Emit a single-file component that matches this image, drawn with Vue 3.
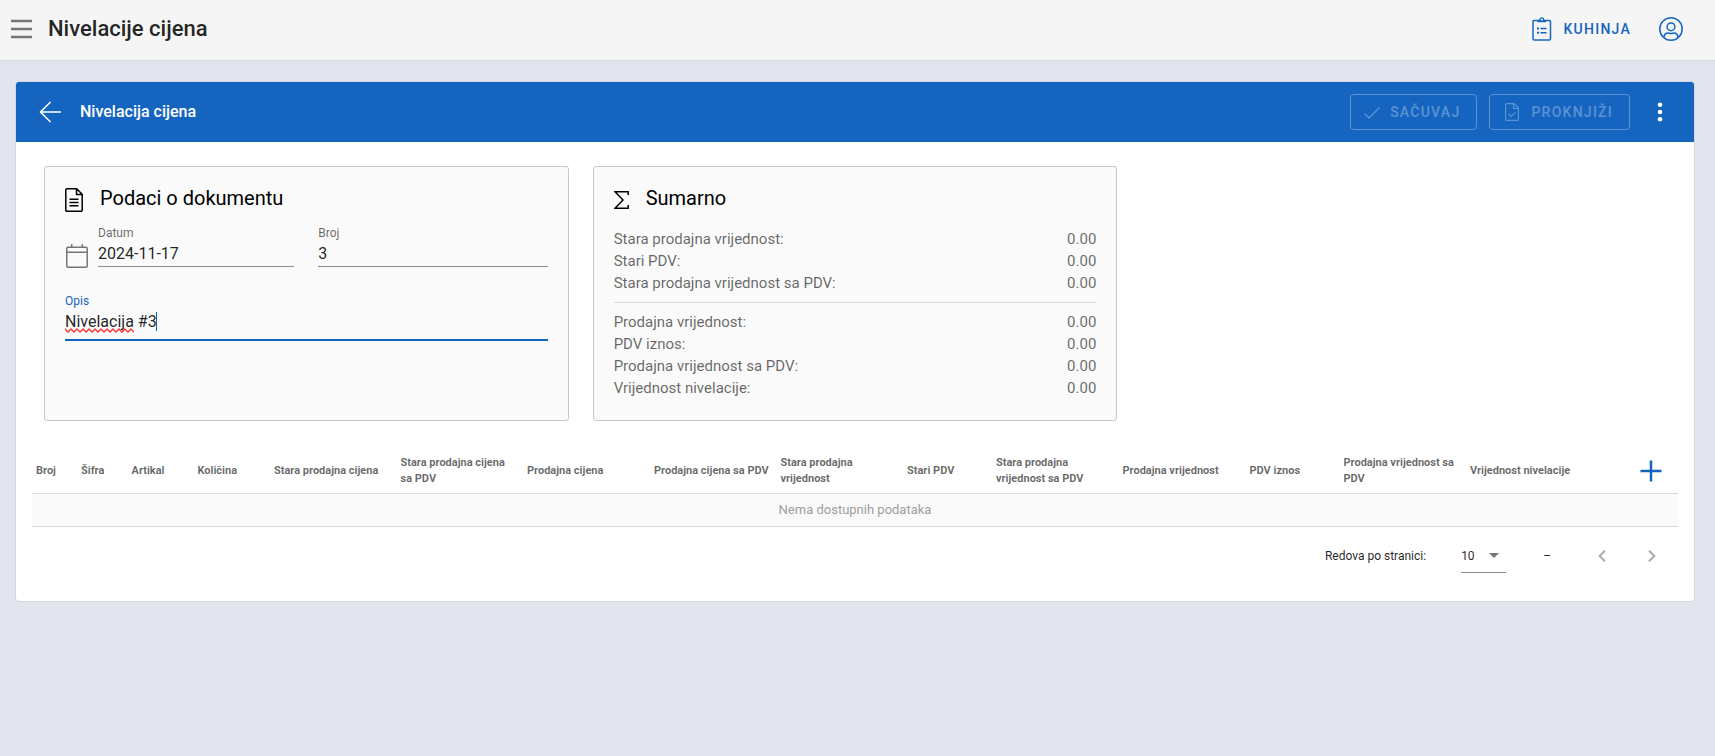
<script setup>
import { ref } from 'vue'

const datum = ref('2024-11-17')
const broj = ref('3')
const opis = ref('Nivelacija #3')
const perPage = ref('10')

const before = [
  { label: 'Stara prodajna vrijednost:', value: '0.00' },
  { label: 'Stari PDV:', value: '0.00' },
  { label: 'Stara prodajna vrijednost sa PDV:', value: '0.00' },
]
const after = [
  { label: 'Prodajna vrijednost:', value: '0.00' },
  { label: 'PDV iznos:', value: '0.00' },
  { label: 'Prodajna vrijednost sa PDV:', value: '0.00' },
  { label: 'Vrijednost nivelacije:', value: '0.00' },
]

// Relative column weights
const columns = [
  { title: 'Broj', w: 90 },
  { title: 'Šifra', w: 101 },
  { title: 'Artikal', w: 132 },
  { title: 'Količina', w: 153 },
  { title: 'Stara prodajna cijena', w: 253 },
  { title: 'Stara prodajna cijena sa PDV', w: 253 },
  { title: 'Prodajna cijena', w: 254 },
  { title: 'Prodajna cijena sa PDV', w: 253 },
  { title: 'Stara prodajna vrijednost', w: 253 },
  { title: 'Stari PDV', w: 178 },
  { title: 'Stara prodajna vrijednost sa PDV', w: 253 },
  { title: 'Prodajna vrijednost', w: 254 },
  { title: 'PDV iznos', w: 188 },
  { title: 'Prodajna vrijednost sa PDV', w: 253 },
  { title: 'Vrijednost nivelacije', w: 253 },
]
const actionWeight = 171
const total = columns.reduce((s, c) => s + c.w, actionWeight)
const pct = (w) => ({ width: (w / total) * 100 + '%' })
</script>

<template>
  <div class="app">
    <header class="topbar">
      <button class="icon-btn menu" type="button" aria-label="Meni">
        <svg width="22" height="20" viewBox="0 0 22 20"><path d="M0 2h21M0 10h21M0 18h21" stroke="#757575" stroke-width="2.300" /></svg>
      </button>
      <h1>Nivelacije cijena</h1>
      <button class="kitchen" type="button">
        <svg width="20" height="24" viewBox="0 0 20 24" fill="none" stroke="currentColor">
          <rect x="1" y="3.5" width="17.5" height="19.5" rx="1.2" stroke-width="1.5" />
          <path d="M5.500 3h2.300a2 2 0 1 1 4 0H14.100v2.200H5.500z" fill="currentColor" stroke="none" />
          <circle cx="9.800" cy="2.600" r="1.800" stroke-width="1.300" fill="#f5f5f5" />
          <path d="M8.500 11.500h6M8.500 15.800h6" stroke-width="1.600" />
          <path d="M5 11.500h2M5 15.800h2" stroke-width="2" />
        </svg>
        KUHINJA
      </button>
      <button class="icon-btn account" type="button" aria-label="Korisnički račun">
        <svg width="24" height="24" viewBox="0 0 24 24" fill="none" stroke="currentColor" stroke-width="1.500">
          <circle cx="12" cy="12" r="11.200" />
          <circle cx="12" cy="9.800" r="3.900" />
          <path d="M5 20.300c.2-3.400 2.200-4.300 4.300-4.300.9 0 1.500.4 2.700.4s1.800-.4 2.700-.4c2.100 0 4.100.9 4.300 4.300" />
        </svg>
      </button>
    </header>

    <main class="card">
      <div class="toolbar">
        <button class="icon-btn back" type="button" aria-label="Nazad">
          <svg width="22" height="22" viewBox="0 0 22 22" fill="none" stroke="#fff" stroke-width="1.500"><path d="M11.500 1 1.500 11l10 10M1.500 11H22" /></svg>
        </button>
        <h2>Nivelacija cijena</h2>
        <button class="outlined save" type="button" disabled>
          <svg width="16" height="18" viewBox="0 0 16 18" fill="none" stroke="currentColor" stroke-width="1.400"><path d="M.5 10.500 5 15 15.500 4.500" /></svg>
          SAČUVAJ
        </button>
        <button class="outlined post" type="button" disabled>
          <svg width="14" height="18" viewBox="0 0 14 18" fill="none" stroke="currentColor" stroke-width="1.200">
            <path d="M1.600.6h7.400L13.400 5v11.400a1 1 0 0 1-1 1H1.600a1 1 0 0 1-1-1V1.600a1 1 0 0 1 1-1zM8.500.6v4.900h4.900M3.500 11l2.500 2.500L10.800 9" />
          </svg>
          PROKNJIŽI
        </button>
        <button class="icon-btn more" type="button" aria-label="Više opcija">
          <svg width="6" height="20" viewBox="0 0 6 20" fill="#fff"><circle cx="3" cy="2.700" r="2.300" /><circle cx="3" cy="10" r="2.300" /><circle cx="3" cy="17.300" r="2.300" /></svg>
        </button>
      </div>

      <div class="panels">
        <section class="panel">
          <h3>
            <svg width="18" height="24" viewBox="0 0 18 24" fill="none" stroke="currentColor" stroke-width="1.500">
              <path d="M2 .8h9.700L17.200 6.300V22a1.200 1.200 0 0 1-1.200 1.200H2A1.200 1.200 0 0 1 .8 22V2A1.200 1.200 0 0 1 2 .8zM11.500.8v5.700h5.700M4.500 11.300h9M4.500 14.500h9M4.500 17.700h9" />
            </svg>
            <span>Podaci o dokumentu</span>
          </h3>
          <div class="fields">
            <div class="date">
              <svg width="24" height="24" viewBox="0 0 24 24" fill="none" stroke="#757575" stroke-width="1.500">
                <rect x="1.800" y="3.200" width="20.400" height="20" rx="1.200" /><path d="M2 8.200h20M6.700 0v3.500M17.300 0v3.500" />
              </svg>
              <div class="field">
                <label for="datum">Datum</label>
                <input id="datum" v-model="datum" type="text" />
              </div>
            </div>
            <div class="field">
              <label for="broj">Broj</label>
              <input id="broj" v-model="broj" type="text" />
            </div>
            <div class="field active">
              <label for="opis">Opis</label>
              <input id="opis" v-model="opis" type="text" spellcheck="false" />
              <svg class="squiggle" width="69" height="5" viewBox="0 0 69 5" fill="none" stroke="#f33" aria-hidden="true">
                <defs><pattern id="wave" width="6" height="5" patternUnits="userSpaceOnUse"><path d="M-1 0 0 1l3 3 3-3 1-1" stroke-width="1.300" /></pattern></defs>
                <rect width="69" height="5" fill="url(#wave)" stroke="none" />
              </svg>
              <span class="caret" aria-hidden="true"></span>
            </div>
          </div>
        </section>

        <section class="panel summary">
          <h3>
            <svg width="15" height="24" viewBox="0 0 15 24" fill="none" stroke="currentColor" stroke-width="1.500">
              <path d="M14.200 7V3.800H1l8 8.200-8 8.200h13.200V17" />
            </svg>
            <span>Sumarno</span>
          </h3>
          <dl>
            <div v-for="r in before" :key="r.label"><dt>{{ r.label }}</dt><dd>{{ r.value }}</dd></div>
          </dl>
          <hr />
          <dl>
            <div v-for="r in after" :key="r.label"><dt>{{ r.label }}</dt><dd>{{ r.value }}</dd></div>
          </dl>
        </section>
      </div>

      <div class="listing">
        <table>
          <colgroup>
            <col v-for="c in columns" :key="c.title" :style="pct(c.w)" />
            <col :style="pct(actionWeight)" />
          </colgroup>
          <thead>
            <tr>
              <th v-for="c in columns" :key="c.title" scope="col">{{ c.title }}</th>
              <th class="action" scope="col">
                <button class="icon-btn add" type="button" aria-label="Dodaj">
                  <svg width="22" height="22" viewBox="0 0 22 22" stroke="#1565c0" stroke-width="2.500"><path d="M11 .500v21M.500 11h21" /></svg>
                </button>
              </th>
            </tr>
          </thead>
          <tbody>
            <tr><td :colspan="columns.length + 1">Nema dostupnih podataka</td></tr>
          </tbody>
        </table>
        <div class="pager">
          <label for="per-page">Redova po stranici:</label>
          <span class="select">
            <select id="per-page" v-model="perPage">
              <option>10</option>
              <option>25</option>
              <option>50</option>
            </select>
            <svg width="10" height="5" viewBox="0 0 10 5" fill="#757575"><path d="M0 0h10L5 5z" /></svg>
          </span>
          <span class="range">–</span>
          <button class="icon-btn page" type="button" disabled aria-label="Prethodna stranica">
            <svg width="8" height="12" viewBox="0 0 8 12" fill="none" stroke="#b0b0b0" stroke-width="2.200"><path d="M7 .700 1.700 6 7 11.300" /></svg>
          </button>
          <button class="icon-btn page" type="button" disabled aria-label="Sljedeća stranica">
            <svg width="8" height="12" viewBox="0 0 8 12" fill="none" stroke="#b0b0b0" stroke-width="2.200"><path d="M1 .700 6.300 6 1 11.300" /></svg>
          </button>
        </div>
      </div>
    </main>
  </div>
</template>

<style>
body {
  background: #e2e5ed;
}
</style>

<style scoped>
.app {
  min-height: 100vh;
  font-family: Roboto, "Liberation Sans", sans-serif;
  color: rgba(0, 0, 0, 0.87);
}
.app *,
.app {
  box-sizing: border-box;
}
h1,
h2,
h3,
dl,
dd {
  margin: 0;
}
svg {
  display: block;
  flex: none;
}
button,
input,
select {
  font-family: inherit;
  color: inherit;
}
button {
  border: 0;
  padding: 0;
  background: none;
  display: flex;
  align-items: center;
}
.icon-btn {
  justify-content: center;
  flex: none;
}
.topbar {
  height: 61px;
  display: flex;
  align-items: center;
  padding: 0 32px 2px 11px;
  background: #f5f5f5;
  border-bottom: 1px solid #d5d7e2;
}
.topbar h1 {
  margin: 0 auto 0 15px;
  font-size: 22px;
  font-weight: 500;
  line-height: 28px;
}
.kitchen {
  gap: 12px;
  color: #1565c0;
  font-size: 14px;
  font-weight: 500;
  letter-spacing: 0.0892em;
}
.account {
  margin-left: 28px;
  color: #1565c0;
}
.card {
  margin: 20px 20px 24px 15px;
  background: #fff;
  border: 1px solid #d3d7e2;
  border-radius: 4px;
}
.toolbar {
  height: 60px;
  display: flex;
  align-items: center;
  padding: 0 31px 0 23px;
  background: #1565c0;
  color: #fff;
  border-radius: 3px 3px 0 0;
}
.toolbar h2 {
  margin: 0 auto 0 19px;
  padding-bottom: 2px;
  font-size: 16px;
  font-weight: 500;
}
.outlined {
  height: 36px;
  gap: 10px;
  padding: 0 16px 0 13px;
  border: 1px solid #5b93d3;
  border-radius: 4px;
  color: #5b93d3;
  font-size: 14px;
  font-weight: 500;
  letter-spacing: 0.0892em;
}
.post {
  margin-left: 12px;
  padding-left: 15px;
  gap: 12px;
}
.more {
  margin-left: 27px;
}
.panels {
  display: grid;
  grid-template-columns: repeat(3, 1fr);
  gap: 24px;
  padding: 24px 28px 0;
}
.panel {
  padding: 20px;
  border: 1px solid #c8c8c8;
  border-radius: 3px;
  background: #fafafa;
}
.panel h3 {
  display: flex;
  align-items: center;
  gap: 17px;
  height: 25px;
  font-size: 20px;
  font-weight: 400;
  color: #000;
}
.panel h3 span {
  padding-bottom: 3px;
}
.fields {
  display: grid;
  grid-template-columns: 1fr 1fr;
  gap: 26px 24px;
  padding-top: 13px;
}
.date {
  display: flex;
  align-items: flex-end;
  gap: 9px;
}
.date .field {
  flex: 1;
}
.date > svg {
  margin-bottom: -1px;
}
.field {
  position: relative;
  display: flex;
  flex-direction: column;
  min-width: 0;
}
.field label {
  font-size: 12px;
  line-height: 16px;
  color: rgba(0, 0, 0, 0.6);
}
.field input {
  width: 100%;
  height: 26px;
  padding: 0;
  border: 0;
  border-bottom: 1px solid #8c8c8c;
  outline: 0;
  background: none;
  font-size: 16px;
}
.field.active {
  grid-column: 1 / -1;
}
.field.active label {
  color: #1565c0;
}
.field.active input {
  height: 32px;
  padding-bottom: 6px;
  border-bottom: 2px solid #1565c0;
}
.squiggle {
  position: absolute;
  left: 0;
  top: 35px;
}
.caret {
  position: absolute;
  left: 91px;
  top: 19px;
  width: 1px;
  height: 19px;
  background: #1565c0;
}
.summary h3 {
  margin-bottom: 16px;
}
.summary dl div {
  display: flex;
  justify-content: space-between;
  font-size: 15px;
  line-height: 22px;
  color: rgba(0, 0, 0, 0.6);
}
.summary hr {
  margin: 8px 0;
  border: 0;
  border-top: 1px solid #d9d9d9;
}
.summary {
  padding-bottom: 21px;
}
.listing {
  padding: 25px 16px 20px;
}
table {
  width: 100%;
  table-layout: fixed;
  border-collapse: collapse;
}
th {
  height: 47px;
  padding: 4px 4px 0;
  text-align: left;
  font-size: 11px;
  font-weight: 700;
  line-height: 16px;
  color: rgba(0, 0, 0, 0.6);
  border-bottom: 1px solid #dcdcdc;
}
td {
  height: 33px;
  padding: 0 4px;
  text-align: center;
  font-size: 13px;
  color: #9e9e9e;
  background: #fafafa;
  border-bottom: 1px solid #dcdcdc;
}
.add {
  width: 46px;
  height: 32px;
  margin-left: auto;
}
.pager {
  display: flex;
  align-items: center;
  justify-content: flex-end;
  height: 50px;
  margin-top: 4px;
  font-size: 12px;
}
.select {
  position: relative;
  display: flex;
  align-items: center;
  width: 45px;
  height: 34px;
  margin-left: 35px;
  padding-top: 1px;
  border-bottom: 1px solid #8c8c8c;
}
.select select {
  appearance: none;
  width: 100%;
  padding: 0;
  border: 0;
  background: none;
  font-size: 12px;
}
.select svg {
  position: absolute;
  right: 7px;
  pointer-events: none;
}
.range {
  margin: 0 31px 0 37px;
}
.page {
  width: 40px;
  height: 32px;
}
.page + .page {
  margin: 0 6px 0 10px;
}
</style>
